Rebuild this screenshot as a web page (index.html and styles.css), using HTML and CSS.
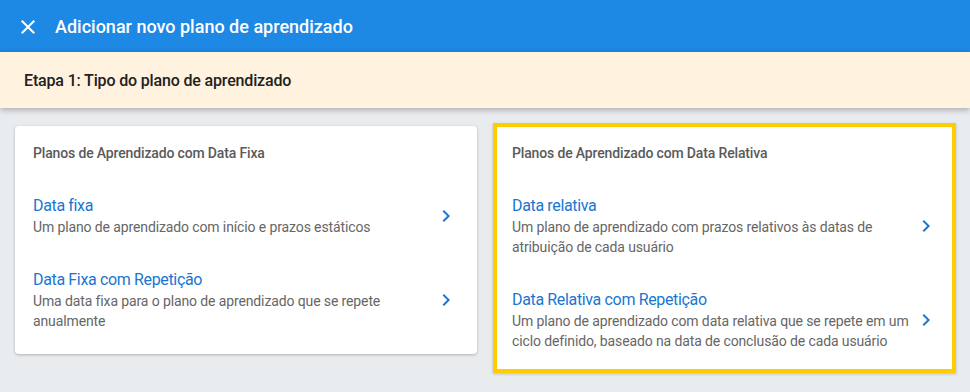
FILE: index.html
```html
<!DOCTYPE html>
<html lang="pt-br">
<head>
    <meta charset="UTF-8">
    <meta name="viewport" content="width=device-width, initial-scale=1.0">
    <title>Adicionar novo plano de aprendizado</title>
    <link rel="stylesheet" href="styles.css">
</head>
<body>

    <!-- Barra superior -->
    <div class="topbar">
        <button class="close-btn" aria-label="Fechar">
            <svg viewBox="0 0 24 24" width="24" height="24"><path d="M19 6.41L17.59 5 12 10.59 6.41 5 5 6.41 10.59 12 5 17.59 6.41 19 12 13.41 17.59 19 19 17.59 13.41 12z"/></svg>
        </button>
        <h1>Adicionar novo plano de aprendizado</h1>
    </div>

    <!-- Etapa -->
    <div class="step">Etapa 1: Tipo do plano de aprendizado</div>

    <!-- Tipos de plano -->
    <div class="plans">
        <div class="card">
            <h2>Planos de Aprendizado com Data Fixa</h2>
            <a class="option" href="#">
                <div class="option-text">
                    <span class="option-title">Data fixa</span>
                    <span class="option-desc">Um plano de aprendizado com início e prazos estáticos</span>
                </div>
                <svg class="chevron" viewBox="0 0 24 24" width="24" height="24"><path d="M10 6L8.59 7.41 13.17 12l-4.58 4.59L10 18l6-6z"/></svg>
            </a>
            <a class="option" href="#">
                <div class="option-text">
                    <span class="option-title">Data Fixa com Repetição</span>
                    <span class="option-desc">Uma data fixa para o plano de aprendizado que se repete anualmente</span>
                </div>
                <svg class="chevron" viewBox="0 0 24 24" width="24" height="24"><path d="M10 6L8.59 7.41 13.17 12l-4.58 4.59L10 18l6-6z"/></svg>
            </a>
        </div>

        <div class="card highlight">
            <h2>Planos de Aprendizado com Data Relativa</h2>
            <a class="option" href="#">
                <div class="option-text">
                    <span class="option-title">Data relativa</span>
                    <span class="option-desc">Um plano de aprendizado com prazos relativos às datas de atribuição de cada usuário</span>
                </div>
                <svg class="chevron" viewBox="0 0 24 24" width="24" height="24"><path d="M10 6L8.59 7.41 13.17 12l-4.58 4.59L10 18l6-6z"/></svg>
            </a>
            <a class="option" href="#">
                <div class="option-text">
                    <span class="option-title">Data Relativa com Repetição</span>
                    <span class="option-desc">Um plano de aprendizado com data relativa que se repete em um ciclo definido, baseado na data de conclusão de cada usuário</span>
                </div>
                <svg class="chevron" viewBox="0 0 24 24" width="24" height="24"><path d="M10 6L8.59 7.41 13.17 12l-4.58 4.59L10 18l6-6z"/></svg>
            </a>
        </div>
    </div>

</body>
</html>
```

FILE: styles.css
```css
body, html {
    margin: 0;
    padding: 0;
    box-sizing: border-box;
    font-family: Roboto, "Liberation Sans", Arial, sans-serif;
    height: 100%;
    background-color: #e9ecef;
    overflow: hidden;
}

*, *::before, *::after {
    box-sizing: inherit;
}

/* Barra superior */
.topbar {
    display: flex;
    align-items: center;
    height: 52px;
    padding: 0 16px;
    background-color: #1e88e5;
    color: #fff;
}

.close-btn {
    display: flex;
    padding: 0;
    margin: 2px 0 0 0;
    border: none;
    background: none;
    cursor: pointer;
}

.close-btn svg {
    fill: #fff;
}

.topbar h1 {
    margin: 0 0 0 15px;
    font-size: 18px;
    font-weight: 500;
}

/* Etapa */
.step {
    position: relative;
    height: 56px;
    padding: 0 24px;
    display: flex;
    align-items: center;
    background-color: #fff2df;
    color: #212121;
    font-size: 16px;
    font-weight: 500;
    letter-spacing: -0.16px;
    box-shadow: 0 2px 6px rgba(0, 0, 0, 0.28);
}

/* Cards */
.plans {
    display: grid;
    grid-template-columns: 462px 463px;
    column-gap: 16px;
    align-items: start;
    padding: 15px 14px 0 15px;
}

.card {
    margin-top: 3px;
    padding: 19px 19px 7px 18px;
    background-color: #fff;
    border-radius: 4px;
    box-shadow: 0 1px 3px rgba(0, 0, 0, 0.25);
}

.card.highlight {
    margin-top: 0;
    padding: 18px 14px 2px 15px;
    border: 4px solid #ffcc00;
    border-radius: 0;
    box-shadow: 0 1px 3px rgba(0, 0, 0, 0.2);
}

.card h2 {
    margin: 0 0 18px 0;
    font-size: 14px;
    line-height: 16px;
    font-weight: 500;
    letter-spacing: -0.15px;
    color: #5a5a5a;
}

.option {
    display: flex;
    align-items: center;
    justify-content: space-between;
    padding: 16px 0 16px 0;
    text-decoration: none;
}

.option-text {
    display: flex;
    flex-direction: column;
    max-width: 401px;
}

.option-title {
    font-size: 16px;
    line-height: 22px;
    letter-spacing: -0.35px;
    color: #1976d2;
}

.option-desc {
    font-size: 14px;
    line-height: 20px;
    letter-spacing: -0.12px;
    color: #666;
}

.chevron {
    flex-shrink: 0;
    fill: #1976d2;
}
```
